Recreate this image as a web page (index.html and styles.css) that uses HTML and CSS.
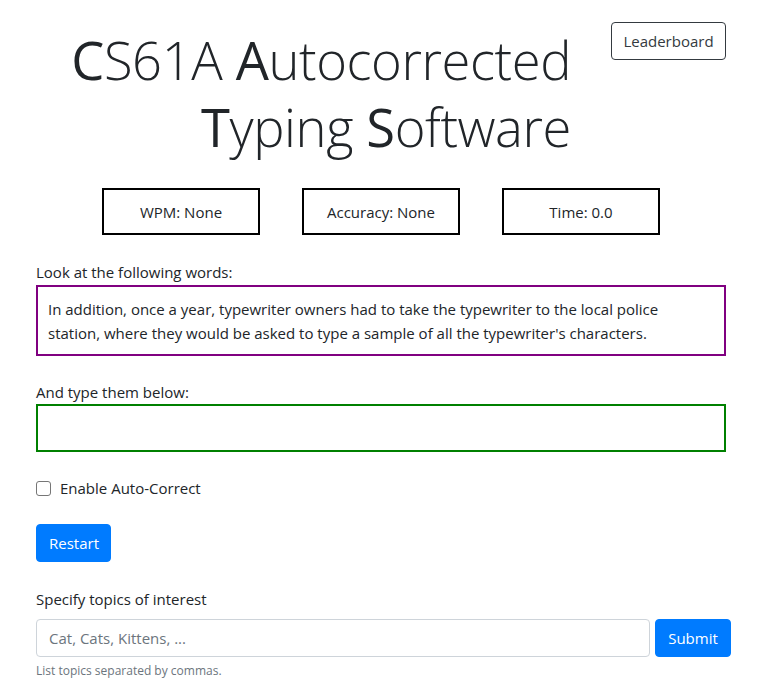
FILE: index.html
```html
<!DOCTYPE html>
<html>
<head>
<meta charset="utf-8">
<link rel="stylesheet" href="styles.css">
</head>
<body>
<div class="container">
  <header class="header">
    <h1 class="title"><b>C</b>S61A <b>A</b>utocorrected <b>T</b>yping <b>S</b>oftware</h1>
    <button class="btn-outline">Leaderboard</button>
  </header>
  <div class="stats">
    <div class="stat">WPM: None</div>
    <div class="stat">Accuracy: None</div>
    <div class="stat">Time: 0.0</div>
  </div>
  <label class="label">Look at the following words:</label>
  <div class="prompt">In addition, once a year, typewriter owners had to take the typewriter to the local police station, where they would be asked to type a sample of all the typewriter's characters.</div>
  <label class="label label-type">And type them below:</label>
  <div class="typebox"></div>
  <label class="check"><span class="checkbox"></span>Enable Auto-Correct</label>
  <button class="btn-primary restart">Restart</button>
  <label class="label label-topics">Specify topics of interest</label>
  <div class="input-group">
    <div class="input">Cat, Cats, Kittens, ...</div>
    <button class="btn-primary submit">Submit</button>
  </div>
  <small class="help">List topics separated by commas.</small>
</div>
</body>
</html>
```
FILE: styles.css
```css
* { box-sizing: border-box; }
html, body { margin: 0; padding: 0; background: #fff; }
body {
  font-family: "Open Sans", "Noto Sans", sans-serif;
  font-size: 15px;
  color: #212529;
  line-height: 24px;
}
.container {
  width: 690px;
  margin-left: 36px;
  display: flex;
  flex-direction: column;
  align-items: flex-start;
}
.header {
  width: 100%;
  display: flex;
  align-items: flex-start;
  justify-content: flex-end;
  padding-top: 22px;
}
.title {
  margin: 0;
  margin-top: 4px;
  width: 535px;
  text-align: right;
  font-size: 52.5px;
  font-weight: 300;
  line-height: 67px;
  letter-spacing: -0.4px;
  color: #212529;
}
.title b { font-weight: 400; }
.btn-outline {
  margin-left: 40px;
  font: inherit;
  color: #343a40;
  background: #fff;
  border: 1px solid #343a40;
  border-radius: 4px;
  height: 38px;
  width: 115px;
  padding: 0;
}
.stats {
  width: 100%;
  display: flex;
  justify-content: center;
  gap: 42px;
  margin-top: 28px;
}
.stat {
  width: 158px;
  height: 47px;
  border: 2px solid #000;
  display: flex;
  align-items: center;
  justify-content: center;
}
.label { display: block; margin-top: 25px; height: 24px; }
.prompt {
  width: 100%;
  border: 2px solid #800080;
  padding: 10px 10px;
  margin-top: 1px;
  height: 71px;
}
.label-type { margin-top: 24px; }
.typebox {
  width: 100%;
  height: 48px;
  border: 2px solid #008000;
  margin-top: 0;
}
.check {
  display: flex;
  align-items: center;
  margin-top: 24px;
  height: 24px;
}
.checkbox {
  width: 15px;
  height: 15px;
  border: 1px solid #767676;
  border-radius: 3px;
  margin-right: 9px;
}
.btn-primary {
  font: inherit;
  color: #fff;
  background: #007bff;
  border: 1px solid #007bff;
  border-radius: 4px;
  height: 38px;
  padding: 0 12px;
}
.restart { margin-top: 24px; width: 75px; }
.label-topics { margin-top: 25px; }
.input-group {
  display: flex;
  width: 695px;
  margin-top: 8px;
  gap: 5px;
}
.input {
  flex: 1;
  height: 38px;
  border: 1px solid #ced4da;
  border-radius: 4px;
  padding: 0 12px;
  line-height: 36px;
  color: #6c757d;
}
.submit { width: 76px; }
.help {
  display: block;
  font-size: 12px;
  color: #6c757d;
  margin-top: 4px;
  line-height: 20px;
}
```
